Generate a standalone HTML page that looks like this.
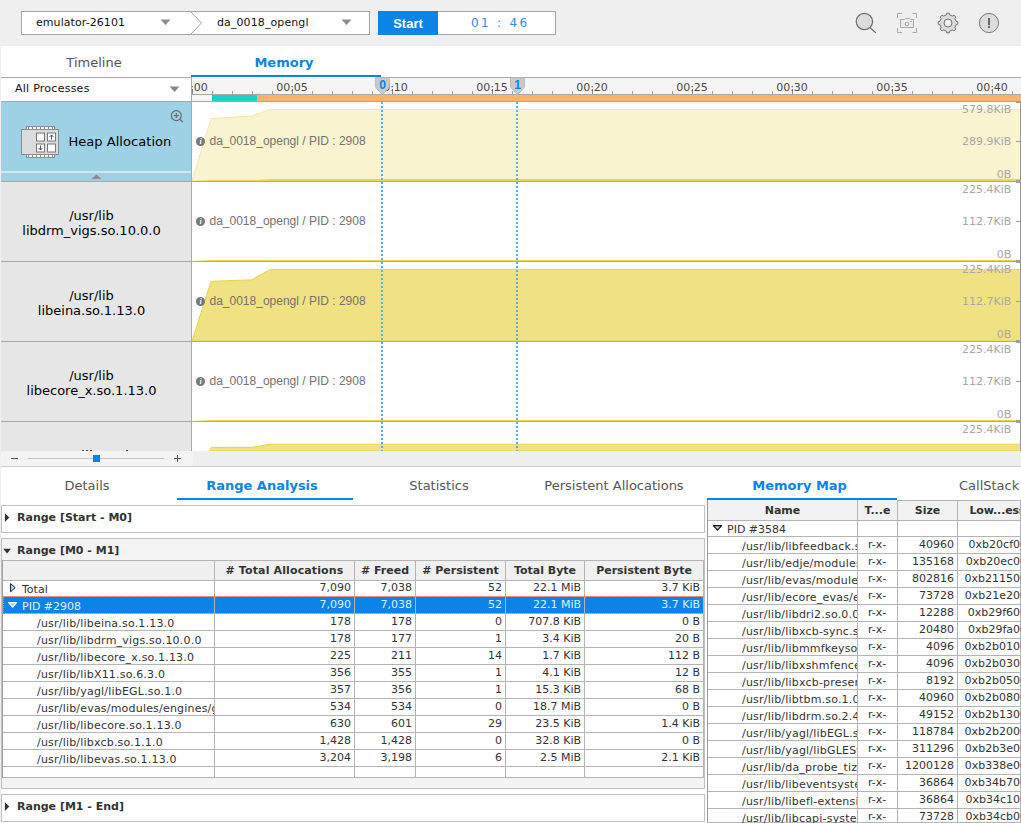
<!DOCTYPE html>
<html><head><meta charset="utf-8"><title>Memory</title>
<style>
*{box-sizing:border-box;margin:0;padding:0}
html,body{width:1021px;height:823px;overflow:hidden;background:#fff}
body{position:relative;font-family:"DejaVu Sans","Liberation Sans",sans-serif;font-size:11px;color:#333;line-height:1}
.a{position:absolute}
.t{position:absolute;white-space:pre;line-height:1}
.b{font-weight:bold}
.f13{font-size:13px}
.c{text-align:center}
.r{text-align:right}
.lbl{position:absolute;left:209.5px;font-family:"Liberation Sans",sans-serif;font-size:12px;color:#727272;white-space:pre;line-height:14px;height:14px}
.ic{position:absolute;left:196px;width:9px;height:9px;border-radius:50%;background:#777;color:#fff;font-family:"Liberation Serif",serif;font-size:8px;font-weight:bold;font-style:italic;line-height:9px;text-align:center}
.ax{position:absolute;right:9.6px;color:#a8a8a8;font-size:11px;white-space:pre;line-height:13px;height:13px}
.lc{position:absolute;left:1px;width:190px;background:#e6e6e6;color:#000;font-size:13px;line-height:15px;text-align:center;padding-right:9px}
.hl{position:absolute;height:1px;background:#a8a8a8}
.vl{position:absolute;width:1px;background:#a8a8a8}
.cell{position:absolute;white-space:pre;overflow:hidden;height:13px;line-height:13px}
</style></head>
<body>
<div class="a" style="left:0;top:0;width:1021px;height:46px;background:#efefef"></div>
<div class="a" style="left:0;top:46px;width:1px;height:777px;background:#efefef"></div>
<div class="a" style="left:21px;top:11px;width:349px;height:24px;background:#fff;border:1px solid #a6a6a6"></div>
<svg class="a" style="left:186px;top:11px" width="20" height="24" viewBox="0 0 20 24"><path d="M4.5 0.5 L15.5 12 L4.5 23.5" fill="none" stroke="#a6a6a6" stroke-width="1"/></svg>
<div class="t" style="left:36px;top:17px;letter-spacing:.07px;color:#111">emulator-26101</div>
<div class="t" style="left:217px;top:17px;letter-spacing:.1px;color:#111">da_0018_opengl</div>
<svg class="a" style="left:160px;top:19px" width="11" height="7"><path d="M0.5 0.5h10l-5 5.5z" fill="#8a8a8a"/></svg>
<svg class="a" style="left:341px;top:19px" width="11" height="7"><path d="M0.5 0.5h10l-5 5.5z" fill="#8a8a8a"/></svg>
<div class="a" style="left:378px;top:11px;width:178px;height:24px;background:#fff;border:1px solid #a6a6a6"></div>
<div class="a c" style="left:378px;top:11px;width:60px;height:24px;background:#0a84e6;color:#fff;font-family:'Liberation Sans',sans-serif;font-weight:bold;font-size:13px;line-height:26px">Start</div>
<div class="t" style="left:471px;top:17px;font-size:12px;letter-spacing:2.3px;color:#2a8fe8">01 : 46</div>
<svg class="a" style="left:850px;top:8px" width="160" height="30" viewBox="850 8 160 30">
<circle cx="864.4" cy="21.5" r="8.2" fill="#dcdcdc" stroke="#6e6e6e" stroke-width="1.2"/>
<path d="M870.3 27.8L875.8 32.8" stroke="#555" stroke-width="1.1" fill="none"/>
<g stroke="#a8a8a8" fill="none" stroke-width="1">
<path d="M897.5 18V13.5H902M912.5 13.5H916.5V18M916.5 28V32.5H912.5M902 32.5H897.5V28"/>
<path d="M900.5 19.5H904.5L905.5 18.5H909.5L910.5 19.5H913.5V27.5H900.5Z" fill="#ededed"/>
<circle cx="907" cy="24" r="1.8"/>
<path d="M910 21.5H912"/>
</g>
<path d="M946.15 15.01 L946.68 13.19 L949.32 13.19 L949.85 15.01 L952.34 16.04 L954.01 15.13 L955.87 16.99 L954.96 18.66 L955.99 21.15 L957.81 21.68 L957.81 24.32 L955.99 24.85 L954.96 27.34 L955.87 29.01 L954.01 30.87 L952.34 29.96 L949.85 30.99 L949.32 32.81 L946.68 32.81 L946.15 30.99 L943.66 29.96 L941.99 30.87 L940.13 29.01 L941.04 27.34 L940.01 24.85 L938.19 24.32 L938.19 21.68 L940.01 21.15 L941.04 18.66 L940.13 16.99 L941.99 15.13 L943.66 16.04Z" fill="#dcdcdc" stroke="#707070" stroke-width="1"/>
<circle cx="948" cy="23" r="4" fill="#efefef" stroke="#707070" stroke-width="1"/>
<circle cx="989" cy="23" r="9.6" fill="#dcdcdc" stroke="#7a7a7a" stroke-width="1"/>
<rect x="988" y="18" width="2" height="7.2" fill="#666"/><rect x="988" y="26.2" width="2" height="1.8" fill="#666"/>
</svg>
<div class="t f13 c" style="left:44px;top:56px;width:100px;color:#555">Timeline</div>
<div class="t f13 b c" style="left:234px;top:56px;width:100px;color:#0a84e6">Memory</div>
<div class="a" style="left:191px;top:75px;width:190px;height:2px;background:#0a84e6"></div>
<div class="hl" style="left:1px;top:77px;width:190px"></div>
<div class="hl" style="left:1px;top:101px;width:1020px"></div>
<div class="vl" style="left:191px;top:77px;height:374px"></div>
<div class="t" style="left:15px;top:83px;font-size:11px;letter-spacing:.25px;color:#111">All Processes</div>
<svg class="a" style="left:169px;top:86px" width="11" height="7"><path d="M0.5 0.5h10l-5 5.5z" fill="#8a8a8a"/></svg>
<div class="a" style="left:192px;top:78px;width:829px;height:23px;background:#f5f5f5"></div>
<div class="hl" style="left:381px;top:77px;width:640px"></div>
<div class="hl" style="left:192px;top:94px;width:829px"></div>
<div class="a" style="left:212px;top:95px;width:45px;height:6px;background:#1fd0c8"></div>
<div class="a" style="left:257px;top:95px;width:764px;height:6px;background:#fdb36b"></div>
<div class="vl" style="left:192px;top:89px;height:5px;background:#8c8c8c"></div><div class="vl" style="left:212px;top:91px;height:3px;background:#a0a0a0"></div><div class="vl" style="left:232px;top:91px;height:3px;background:#a0a0a0"></div><div class="vl" style="left:252px;top:91px;height:3px;background:#a0a0a0"></div><div class="vl" style="left:272px;top:91px;height:3px;background:#a0a0a0"></div><div class="vl" style="left:292px;top:89px;height:5px;background:#8c8c8c"></div><div class="vl" style="left:312px;top:91px;height:3px;background:#a0a0a0"></div><div class="vl" style="left:332px;top:91px;height:3px;background:#a0a0a0"></div><div class="vl" style="left:352px;top:91px;height:3px;background:#a0a0a0"></div><div class="vl" style="left:372px;top:91px;height:3px;background:#a0a0a0"></div><div class="vl" style="left:392px;top:89px;height:5px;background:#8c8c8c"></div><div class="vl" style="left:412px;top:91px;height:3px;background:#a0a0a0"></div><div class="vl" style="left:432px;top:91px;height:3px;background:#a0a0a0"></div><div class="vl" style="left:452px;top:91px;height:3px;background:#a0a0a0"></div><div class="vl" style="left:472px;top:91px;height:3px;background:#a0a0a0"></div><div class="vl" style="left:492px;top:89px;height:5px;background:#8c8c8c"></div><div class="vl" style="left:512px;top:91px;height:3px;background:#a0a0a0"></div><div class="vl" style="left:532px;top:91px;height:3px;background:#a0a0a0"></div><div class="vl" style="left:552px;top:91px;height:3px;background:#a0a0a0"></div><div class="vl" style="left:572px;top:91px;height:3px;background:#a0a0a0"></div><div class="vl" style="left:592px;top:89px;height:5px;background:#8c8c8c"></div><div class="vl" style="left:612px;top:91px;height:3px;background:#a0a0a0"></div><div class="vl" style="left:632px;top:91px;height:3px;background:#a0a0a0"></div><div class="vl" style="left:652px;top:91px;height:3px;background:#a0a0a0"></div><div class="vl" style="left:672px;top:91px;height:3px;background:#a0a0a0"></div><div class="vl" style="left:692px;top:89px;height:5px;background:#8c8c8c"></div><div class="vl" style="left:712px;top:91px;height:3px;background:#a0a0a0"></div><div class="vl" style="left:732px;top:91px;height:3px;background:#a0a0a0"></div><div class="vl" style="left:752px;top:91px;height:3px;background:#a0a0a0"></div><div class="vl" style="left:772px;top:91px;height:3px;background:#a0a0a0"></div><div class="vl" style="left:792px;top:89px;height:5px;background:#8c8c8c"></div><div class="vl" style="left:812px;top:91px;height:3px;background:#a0a0a0"></div><div class="vl" style="left:832px;top:91px;height:3px;background:#a0a0a0"></div><div class="vl" style="left:852px;top:91px;height:3px;background:#a0a0a0"></div><div class="vl" style="left:872px;top:91px;height:3px;background:#a0a0a0"></div><div class="vl" style="left:892px;top:89px;height:5px;background:#8c8c8c"></div><div class="vl" style="left:912px;top:91px;height:3px;background:#a0a0a0"></div><div class="vl" style="left:932px;top:91px;height:3px;background:#a0a0a0"></div><div class="vl" style="left:952px;top:91px;height:3px;background:#a0a0a0"></div><div class="vl" style="left:972px;top:91px;height:3px;background:#a0a0a0"></div><div class="vl" style="left:992px;top:89px;height:5px;background:#8c8c8c"></div><div class="vl" style="left:1012px;top:91px;height:3px;background:#a0a0a0"></div>
<div class="a" style="left:192px;top:78px;width:829px;height:16px;overflow:hidden">
<div class="t c" style="left:-30px;top:4px;width:60px;color:#4a4a4a">00:00</div>
<div class="t c" style="left:70px;top:4px;width:60px;color:#4a4a4a">00:05</div>
<div class="t c" style="left:170px;top:4px;width:60px;color:#4a4a4a">00:10</div>
<div class="t c" style="left:270px;top:4px;width:60px;color:#4a4a4a">00:15</div>
<div class="t c" style="left:370px;top:4px;width:60px;color:#4a4a4a">00:20</div>
<div class="t c" style="left:470px;top:4px;width:60px;color:#4a4a4a">00:25</div>
<div class="t c" style="left:570px;top:4px;width:60px;color:#4a4a4a">00:30</div>
<div class="t c" style="left:670px;top:4px;width:60px;color:#4a4a4a">00:35</div>
<div class="t c" style="left:770px;top:4px;width:60px;color:#4a4a4a">00:40</div>
</div>
<div class="a" style="left:1px;top:102px;width:190px;height:79px;background:#9dd1e6"></div>
<div class="a" style="left:1px;top:171px;width:190px;height:2px;background:#d3e4eb"></div>
<svg class="a" style="left:91px;top:174px" width="11" height="6"><path d="M0.5 5h10l-5 -4.5z" fill="#8c8c8c"/></svg>
<div class="t f13" style="left:68.4px;top:135px;letter-spacing:.05px;color:#000">Heap Allocation</div>
<svg class="a" style="left:20px;top:125px" width="40" height="34" viewBox="20 125 40 34"><rect x="26.5" y="126.5" width="28" height="31" fill="#f4f4f4" stroke="#8c8c8c"/><path d="M28.5 126.5V129M28.5 155V157.5" stroke="#8c8c8c" fill="none"/><path d="M32.5 126.5V129M32.5 155V157.5" stroke="#8c8c8c" fill="none"/><path d="M36.5 126.5V129M36.5 155V157.5" stroke="#8c8c8c" fill="none"/><path d="M40.5 126.5V129M40.5 155V157.5" stroke="#8c8c8c" fill="none"/><path d="M44.5 126.5V129M44.5 155V157.5" stroke="#8c8c8c" fill="none"/><path d="M48.5 126.5V129M48.5 155V157.5" stroke="#8c8c8c" fill="none"/><path d="M52.5 126.5V129M52.5 155V157.5" stroke="#8c8c8c" fill="none"/><rect x="21.5" y="129.5" width="37" height="25" fill="#dcdcdc" stroke="#8c8c8c"/><rect x="36.5" y="133.0" width="8" height="8" fill="#fff" stroke="#777"/><rect x="47.5" y="133.0" width="8" height="8" fill="#fff" stroke="#777"/><rect x="36.5" y="144.0" width="8" height="8" fill="#fff" stroke="#777"/><rect x="47.5" y="144.0" width="8" height="8" fill="#fff" stroke="#777"/><path d="M51.5 139.5V135M49.5 137L51.5 135L53.5 137" stroke="#555" fill="none"/><path d="M40.5 145.5V150M38.5 148L40.5 150L42.5 148" stroke="#555" fill="none"/></svg>
<svg class="a" style="left:168px;top:108px" width="18" height="18" viewBox="168 108 18 18"><circle cx="176.3" cy="115.6" r="5" fill="none" stroke="#6a6a6a" stroke-width="1.2"/><path d="M173.8 115.6h5M176.3 113.1v5M179.9 119.4L182.8 122" stroke="#6a6a6a" stroke-width="1.2" fill="none"/></svg>
<div class="lc" style="top:182px;height:79px;padding-top:26px;overflow:hidden">/usr/lib<br>libdrm_vigs.so.10.0.0</div>
<div class="lc" style="top:262px;height:79px;padding-top:26px;overflow:hidden">/usr/lib<br>libeina.so.1.13.0</div>
<div class="lc" style="top:342px;height:79px;padding-top:26px;overflow:hidden">/usr/lib<br>libecore_x.so.1.13.0</div>
<div class="lc" style="top:422px;height:29px;padding-top:31px;overflow:hidden">/usr/lib<br>libecore.so.1.13.0</div>
<div class="hl" style="left:1px;top:181px;width:1020px"></div>
<div class="hl" style="left:1px;top:261px;width:1020px"></div>
<div class="hl" style="left:1px;top:341px;width:1020px"></div>
<div class="hl" style="left:1px;top:421px;width:1020px"></div>
<svg class="a" style="left:192px;top:102px" width="829" height="349" viewBox="192 102 829 349"><path d="M192 181.0 L211 118.5 L251.6 116.0 L270.3 109.4 L1021 109.4 L1021 181.0 Z" fill="#f9f3cf" stroke="#f1e8a8" stroke-width="1"/><path d="M192 181 L211 180 L257 180 L270 179 L1021 179 L1021 181Z" fill="#ead650"/><path d="M192 261 L211 260 L1021 260 L1021 261Z" fill="#ead650"/><path d="M192 341.0 L211 281.3 L251.6 279.8 L270.3 269.4 L1021 269.4 L1021 341.0 Z" fill="#f0e183" stroke="#e8d350" stroke-width="1"/><path d="M192 421 L211 420 L1021 420 L1021 421Z" fill="#ead650"/><path d="M209.8 451 L211 447.5 L251.6 447.3 L270.3 444.2 L1021 444.2 L1021 451Z" fill="#f0e183" stroke="#e8d350"/><path d="M382 102V451" stroke="#5aaeea" stroke-width="2" stroke-dasharray="2 2" fill="none"/><path d="M517 102V451" stroke="#5aaeea" stroke-width="2" stroke-dasharray="2 2" fill="none"/></svg>
<div class="hl" style="left:192px;top:181px;width:829px"></div>
<div class="hl" style="left:192px;top:261px;width:829px"></div>
<div class="hl" style="left:192px;top:341px;width:829px"></div>
<div class="hl" style="left:192px;top:421px;width:829px"></div>
<div class="vl" style="left:1020px;top:102px;height:349px;background:#9a9a9a"></div>
<div class="hl" style="left:1016px;top:102px;width:4px;background:#9a9a9a"></div>
<div class="hl" style="left:1016px;top:141px;width:4px;background:#9a9a9a"></div>
<div class="hl" style="left:1016px;top:180px;width:4px;background:#9a9a9a"></div>
<div class="hl" style="left:1016px;top:182px;width:4px;background:#9a9a9a"></div>
<div class="hl" style="left:1016px;top:221px;width:4px;background:#9a9a9a"></div>
<div class="hl" style="left:1016px;top:260px;width:4px;background:#9a9a9a"></div>
<div class="hl" style="left:1016px;top:262px;width:4px;background:#9a9a9a"></div>
<div class="hl" style="left:1016px;top:301px;width:4px;background:#9a9a9a"></div>
<div class="hl" style="left:1016px;top:340px;width:4px;background:#9a9a9a"></div>
<div class="hl" style="left:1016px;top:342px;width:4px;background:#9a9a9a"></div>
<div class="hl" style="left:1016px;top:381px;width:4px;background:#9a9a9a"></div>
<div class="hl" style="left:1016px;top:420px;width:4px;background:#9a9a9a"></div>
<div class="hl" style="left:1016px;top:422px;width:4px;background:#9a9a9a"></div>
<div class="ic" style="top:137.0px">i</div>
<div class="lbl" style="top:134.0px">da_0018_opengl / PID : 2908</div>
<div class="ic" style="top:217.0px">i</div>
<div class="lbl" style="top:214.0px">da_0018_opengl / PID : 2908</div>
<div class="ic" style="top:297.0px">i</div>
<div class="lbl" style="top:294.0px">da_0018_opengl / PID : 2908</div>
<div class="ic" style="top:377.0px">i</div>
<div class="lbl" style="top:374.0px">da_0018_opengl / PID : 2908</div>
<div class="ax" style="top:103px">579.8KiB</div>
<div class="ax" style="top:135px">289.9KiB</div>
<div class="ax" style="top:168px">0B</div>
<div class="ax" style="top:183px">225.4KiB</div>
<div class="ax" style="top:215px">112.7KiB</div>
<div class="ax" style="top:248px">0B</div>
<div class="ax" style="top:263px">225.4KiB</div>
<div class="ax" style="top:295px">112.7KiB</div>
<div class="ax" style="top:328px">0B</div>
<div class="ax" style="top:343px">225.4KiB</div>
<div class="ax" style="top:375px">112.7KiB</div>
<div class="ax" style="top:408px">0B</div>
<div class="ax" style="top:423px">225.4KiB</div>
<svg class="a" style="left:374px;top:77px" width="16" height="19" viewBox="0 0 16 19"><path d="M1.4 0.5H15.6V10L8.5 18L1.4 10Z" fill="#c9c9c9" stroke="#adadad" stroke-width="0.7"/><text x="8.5" y="11.8" text-anchor="middle" style="font:bold 12px 'Liberation Sans',sans-serif" fill="#0a84e6">0</text></svg>
<svg class="a" style="left:509px;top:77px" width="16" height="19" viewBox="0 0 16 19"><path d="M1.4 0.5H15.6V10L8.5 18L1.4 10Z" fill="#c9c9c9" stroke="#adadad" stroke-width="0.7"/><text x="8.5" y="11.8" text-anchor="middle" style="font:bold 12px 'Liberation Sans',sans-serif" fill="#0a84e6">1</text></svg>
<div class="a" style="left:82px;top:450px;width:2px;height:1px;background:#5a4030"></div>
<div class="a" style="left:86px;top:450px;width:2px;height:1px;background:#5a4030"></div>
<div class="a" style="left:90px;top:450px;width:2px;height:1px;background:#5a4030"></div>
<div class="a" style="left:126px;top:450px;width:2px;height:1px;background:#5a4030"></div>
<div class="a" style="left:1px;top:451px;width:1020px;height:15px;background:#eeeeee"></div>
<div class="a" style="left:1px;top:451px;width:192px;height:15px;background:#f3f3f3"></div>
<div class="a" style="left:1px;top:466px;width:1020px;height:1px;background:#cfcfcf"></div>
<div class="a" style="left:28px;top:458px;width:136px;height:1px;background:#c4c4c4"></div>
<div class="a" style="left:93px;top:455px;width:7px;height:7px;background:#0a84e6"></div>
<div class="a" style="left:11px;top:458px;width:7px;height:1px;background:#555"></div>
<div class="a" style="left:174px;top:458px;width:7px;height:1px;background:#555"></div>
<div class="a" style="left:177px;top:455px;width:1px;height:7px;background:#555"></div>
<div class="t f13 c" style="left:-13px;top:479px;width:200px;color:#555">Details</div>
<div class="t f13 b c" style="left:162.0px;top:479px;width:200px;color:#0a84e6">Range Analysis</div>
<div class="t f13 c" style="left:339px;top:479px;width:200px;color:#555">Statistics</div>
<div class="t f13 c" style="left:514px;top:479px;width:200px;color:#555">Persistent Allocations</div>
<div class="t f13 b c" style="left:699.6px;top:479px;width:200px;color:#0a84e6">Memory Map</div>
<div class="t f13" style="left:959px;top:479px;color:#555">CallStack</div>
<div class="a" style="left:177px;top:498px;width:176px;height:2px;background:#0a84e6"></div>
<div class="a" style="left:707px;top:498px;width:190px;height:2px;background:#0a84e6"></div>
<div class="a" style="left:1px;top:505px;width:704px;height:28px;border:1px solid #c0c0c0;background:#fff"></div>
<svg class="a" style="left:4px;top:513px" width="7" height="10"><path d="M0.9 0.2V9L5.3 4.6Z" fill="#333"/></svg>
<div class="t b" style="left:17px;top:512px;color:#333">Range [Start - M0]</div>
<div class="a" style="left:1px;top:538px;width:704px;height:251px;border:1px solid #c0c0c0;background:#f3f3f3"></div>
<svg class="a" style="left:3px;top:548px" width="9" height="6"><path d="M0.3 0.8H7.9L4.1 5.4Z" fill="#333"/></svg>
<div class="t b" style="left:17px;top:545px;color:#333">Range [M0 - M1]</div>
<div class="a" style="left:1px;top:794px;width:704px;height:28px;border:1px solid #c0c0c0;background:#fff"></div>
<svg class="a" style="left:4px;top:802px" width="7" height="10"><path d="M0.9 0.2V9L5.3 4.6Z" fill="#333"/></svg>
<div class="t b" style="left:17px;top:801px;color:#333">Range [M1 - End]</div>
<div class="a" style="left:2px;top:560px;width:702px;height:218px;background:#fff"></div>
<div class="a" style="left:2px;top:561px;width:702px;height:19px;background:#f0f0f0"></div>
<div class="a" style="left:3px;top:597px;width:700px;height:16px;background:#0a84e6"></div>
<div class="hl" style="left:2px;top:560px;width:702px;background:#b4b4b4"></div>
<div class="hl" style="left:2px;top:580px;width:702px;background:#b4b4b4"></div>
<div class="hl" style="left:2px;top:596px;width:702px;background:#b4b4b4"></div>
<div class="hl" style="left:2px;top:613px;width:702px;background:#b4b4b4"></div>
<div class="hl" style="left:2px;top:630px;width:702px;background:#b4b4b4"></div>
<div class="hl" style="left:2px;top:647px;width:702px;background:#b4b4b4"></div>
<div class="hl" style="left:2px;top:664px;width:702px;background:#b4b4b4"></div>
<div class="hl" style="left:2px;top:681px;width:702px;background:#b4b4b4"></div>
<div class="hl" style="left:2px;top:698px;width:702px;background:#b4b4b4"></div>
<div class="hl" style="left:2px;top:715px;width:702px;background:#b4b4b4"></div>
<div class="hl" style="left:2px;top:732px;width:702px;background:#b4b4b4"></div>
<div class="hl" style="left:2px;top:749px;width:702px;background:#b4b4b4"></div>
<div class="hl" style="left:2px;top:766px;width:702px;background:#b4b4b4"></div>
<div class="hl" style="left:2px;top:777px;width:702px;background:#b4b4b4"></div>
<div class="vl" style="left:2px;top:560px;height:218px;background:#a0a0a0"></div>
<div class="vl" style="left:214px;top:560px;height:218px;background:#b4b4b4"></div>
<div class="vl" style="left:354px;top:560px;height:218px;background:#b4b4b4"></div>
<div class="vl" style="left:415px;top:560px;height:218px;background:#b4b4b4"></div>
<div class="vl" style="left:505px;top:560px;height:218px;background:#b4b4b4"></div>
<div class="vl" style="left:584px;top:560px;height:218px;background:#b4b4b4"></div>
<div class="vl" style="left:703px;top:560px;height:218px;background:#b4b4b4"></div>
<div class="a" style="left:3px;top:596px;width:700px;height:18px;border:1px dotted #e4806a;border-right:none"></div>
<div class="cell b c" style="left:215px;top:564px;width:139px;letter-spacing:.13px"># Total Allocations</div>
<div class="cell b c" style="left:355px;top:564px;width:60px"># Freed</div>
<div class="cell b c" style="left:416px;top:564px;width:89px"># Persistent</div>
<div class="cell b c" style="left:506px;top:564px;width:78px">Total Byte</div>
<div class="cell b c" style="left:585px;top:564px;width:118px">Persistent Byte</div>
<div class="cell" style="left:22px;top:583px;width:192px;color:#333">Total</div>
<div class="cell r" style="left:215px;top:581px;width:136px;color:#333">7,090</div>
<div class="cell r" style="left:355px;top:581px;width:57px;color:#333">7,038</div>
<div class="cell r" style="left:416px;top:581px;width:86px;color:#333">52</div>
<div class="cell r" style="left:506px;top:581px;width:75px;color:#333">22.1 MiB</div>
<div class="cell r" style="left:585px;top:581px;width:115px;color:#333">3.7 KiB</div>
<div class="cell" style="left:22px;top:600px;width:192px;color:#e4eefa">PID #2908</div>
<div class="cell r" style="left:215px;top:598px;width:136px;color:#e4eefa">7,090</div>
<div class="cell r" style="left:355px;top:598px;width:57px;color:#e4eefa">7,038</div>
<div class="cell r" style="left:416px;top:598px;width:86px;color:#e4eefa">52</div>
<div class="cell r" style="left:506px;top:598px;width:75px;color:#e4eefa">22.1 MiB</div>
<div class="cell r" style="left:585px;top:598px;width:115px;color:#e4eefa">3.7 KiB</div>
<div class="cell" style="left:37px;top:617px;width:177px;color:#333;letter-spacing:.2px">/usr/lib/libeina.so.1.13.0</div>
<div class="cell r" style="left:215px;top:615px;width:136px;color:#333">178</div>
<div class="cell r" style="left:355px;top:615px;width:57px;color:#333">178</div>
<div class="cell r" style="left:416px;top:615px;width:86px;color:#333">0</div>
<div class="cell r" style="left:506px;top:615px;width:75px;color:#333">707.8 KiB</div>
<div class="cell r" style="left:585px;top:615px;width:115px;color:#333">0 B</div>
<div class="cell" style="left:37px;top:634px;width:177px;color:#333;letter-spacing:.2px">/usr/lib/libdrm_vigs.so.10.0.0</div>
<div class="cell r" style="left:215px;top:632px;width:136px;color:#333">178</div>
<div class="cell r" style="left:355px;top:632px;width:57px;color:#333">177</div>
<div class="cell r" style="left:416px;top:632px;width:86px;color:#333">1</div>
<div class="cell r" style="left:506px;top:632px;width:75px;color:#333">3.4 KiB</div>
<div class="cell r" style="left:585px;top:632px;width:115px;color:#333">20 B</div>
<div class="cell" style="left:37px;top:651px;width:177px;color:#333;letter-spacing:.2px">/usr/lib/libecore_x.so.1.13.0</div>
<div class="cell r" style="left:215px;top:649px;width:136px;color:#333">225</div>
<div class="cell r" style="left:355px;top:649px;width:57px;color:#333">211</div>
<div class="cell r" style="left:416px;top:649px;width:86px;color:#333">14</div>
<div class="cell r" style="left:506px;top:649px;width:75px;color:#333">1.7 KiB</div>
<div class="cell r" style="left:585px;top:649px;width:115px;color:#333">112 B</div>
<div class="cell" style="left:37px;top:668px;width:177px;color:#333;letter-spacing:.2px">/usr/lib/libX11.so.6.3.0</div>
<div class="cell r" style="left:215px;top:666px;width:136px;color:#333">356</div>
<div class="cell r" style="left:355px;top:666px;width:57px;color:#333">355</div>
<div class="cell r" style="left:416px;top:666px;width:86px;color:#333">1</div>
<div class="cell r" style="left:506px;top:666px;width:75px;color:#333">4.1 KiB</div>
<div class="cell r" style="left:585px;top:666px;width:115px;color:#333">12 B</div>
<div class="cell" style="left:37px;top:685px;width:177px;color:#333;letter-spacing:.2px">/usr/lib/yagl/libEGL.so.1.0</div>
<div class="cell r" style="left:215px;top:683px;width:136px;color:#333">357</div>
<div class="cell r" style="left:355px;top:683px;width:57px;color:#333">356</div>
<div class="cell r" style="left:416px;top:683px;width:86px;color:#333">1</div>
<div class="cell r" style="left:506px;top:683px;width:75px;color:#333">15.3 KiB</div>
<div class="cell r" style="left:585px;top:683px;width:115px;color:#333">68 B</div>
<div class="cell" style="left:37px;top:702px;width:177px;color:#333;letter-spacing:.2px">/usr/lib/evas/modules/engines/gl_x11/v-1.13/module.so</div>
<div class="cell r" style="left:215px;top:700px;width:136px;color:#333">534</div>
<div class="cell r" style="left:355px;top:700px;width:57px;color:#333">534</div>
<div class="cell r" style="left:416px;top:700px;width:86px;color:#333">0</div>
<div class="cell r" style="left:506px;top:700px;width:75px;color:#333">18.7 MiB</div>
<div class="cell r" style="left:585px;top:700px;width:115px;color:#333">0 B</div>
<div class="cell" style="left:37px;top:719px;width:177px;color:#333;letter-spacing:.2px">/usr/lib/libecore.so.1.13.0</div>
<div class="cell r" style="left:215px;top:717px;width:136px;color:#333">630</div>
<div class="cell r" style="left:355px;top:717px;width:57px;color:#333">601</div>
<div class="cell r" style="left:416px;top:717px;width:86px;color:#333">29</div>
<div class="cell r" style="left:506px;top:717px;width:75px;color:#333">23.5 KiB</div>
<div class="cell r" style="left:585px;top:717px;width:115px;color:#333">1.4 KiB</div>
<div class="cell" style="left:37px;top:736px;width:177px;color:#333;letter-spacing:.2px">/usr/lib/libxcb.so.1.1.0</div>
<div class="cell r" style="left:215px;top:734px;width:136px;color:#333">1,428</div>
<div class="cell r" style="left:355px;top:734px;width:57px;color:#333">1,428</div>
<div class="cell r" style="left:416px;top:734px;width:86px;color:#333">0</div>
<div class="cell r" style="left:506px;top:734px;width:75px;color:#333">32.8 KiB</div>
<div class="cell r" style="left:585px;top:734px;width:115px;color:#333">0 B</div>
<div class="cell" style="left:37px;top:753px;width:177px;color:#333;letter-spacing:.2px">/usr/lib/libevas.so.1.13.0</div>
<div class="cell r" style="left:215px;top:751px;width:136px;color:#333">3,204</div>
<div class="cell r" style="left:355px;top:751px;width:57px;color:#333">3,198</div>
<div class="cell r" style="left:416px;top:751px;width:86px;color:#333">6</div>
<div class="cell r" style="left:506px;top:751px;width:75px;color:#333">2.5 MiB</div>
<div class="cell r" style="left:585px;top:751px;width:115px;color:#333">2.1 KiB</div>
<svg class="a" style="left:9px;top:582px" width="8" height="11"><path d="M1.6 1.6V9.8L6.2 5.7Z" fill="#b5dcff" stroke="#151515" stroke-width="1" stroke-linejoin="round"/></svg>
<svg class="a" style="left:7px;top:601px" width="12" height="8"><path d="M1.6 1.6H9.6L5.6 6.2Z" fill="#9fd0ff" stroke="#fff" stroke-width="1.2" stroke-linejoin="round"/></svg>
<div class="a" style="left:707px;top:500px;width:314px;height:20px;background:#f2f2f2"></div>
<div class="hl" style="left:707px;top:520px;width:314px;background:#b4b4b4"></div>
<div class="hl" style="left:707px;top:536px;width:314px;background:#b4b4b4"></div>
<div class="hl" style="left:707px;top:553px;width:314px;background:#b4b4b4"></div>
<div class="hl" style="left:707px;top:570px;width:314px;background:#b4b4b4"></div>
<div class="hl" style="left:707px;top:587px;width:314px;background:#b4b4b4"></div>
<div class="hl" style="left:707px;top:604px;width:314px;background:#b4b4b4"></div>
<div class="hl" style="left:707px;top:621px;width:314px;background:#b4b4b4"></div>
<div class="hl" style="left:707px;top:638px;width:314px;background:#b4b4b4"></div>
<div class="hl" style="left:707px;top:655px;width:314px;background:#b4b4b4"></div>
<div class="hl" style="left:707px;top:672px;width:314px;background:#b4b4b4"></div>
<div class="hl" style="left:707px;top:689px;width:314px;background:#b4b4b4"></div>
<div class="hl" style="left:707px;top:706px;width:314px;background:#b4b4b4"></div>
<div class="hl" style="left:707px;top:723px;width:314px;background:#b4b4b4"></div>
<div class="hl" style="left:707px;top:740px;width:314px;background:#b4b4b4"></div>
<div class="hl" style="left:707px;top:757px;width:314px;background:#b4b4b4"></div>
<div class="hl" style="left:707px;top:774px;width:314px;background:#b4b4b4"></div>
<div class="hl" style="left:707px;top:791px;width:314px;background:#b4b4b4"></div>
<div class="hl" style="left:707px;top:808px;width:314px;background:#b4b4b4"></div>
<div class="hl" style="left:707px;top:825px;width:314px;background:#b4b4b4"></div>
<div class="vl" style="left:707px;top:500px;height:323px;background:#9a9a9a"></div>
<div class="vl" style="left:857px;top:500px;height:323px;background:#b4b4b4"></div>
<div class="vl" style="left:897px;top:500px;height:323px;background:#b4b4b4"></div>
<div class="vl" style="left:957px;top:500px;height:323px;background:#b4b4b4"></div>
<div class="hl" style="left:707px;top:822px;width:314px;background:#b4b4b4"></div>
<div class="cell b" style="left:969.5px;top:504px;width:60px;letter-spacing:-.15px">Low...ess</div>
<div class="hl" style="left:897px;top:500px;width:124px;background:#b4b4b4"></div>
<div class="vl" style="left:1020px;top:500px;height:323px;background:#b4b4b4"></div>
<div class="cell b c" style="left:708px;top:504px;width:149px">Name</div>
<div class="cell b c" style="left:858px;top:504px;width:39px">T...e</div>
<div class="cell b c" style="left:898px;top:504px;width:59px">Size</div>
<svg class="a" style="left:712px;top:524px" width="12" height="8"><path d="M1.4 1.6H9.6L5.5 6.2Z" fill="#a6d3fb" stroke="#151515" stroke-width="1.2" stroke-linejoin="round"/></svg>
<div class="cell" style="left:727px;top:523px;width:129px">PID #3584</div>
<div class="cell" style="left:742px;top:540px;width:115px;letter-spacing:.2px">/usr/lib/libfeedback.so.0.1.4</div>
<div class="cell" style="left:868px;top:538px;width:29px">r-x-</div>
<div class="cell r" style="left:898px;top:538px;width:56px">40960</div>
<div class="cell r" style="left:958px;top:538px;width:76px">0xb20cf000</div>
<div class="cell" style="left:742px;top:557px;width:115px;letter-spacing:.2px">/usr/lib/edje/modules/elm/v-1.13/module.so</div>
<div class="cell" style="left:868px;top:555px;width:29px">r-x-</div>
<div class="cell r" style="left:898px;top:555px;width:56px">135168</div>
<div class="cell r" style="left:958px;top:555px;width:76px">0xb20ec000</div>
<div class="cell" style="left:742px;top:574px;width:115px;letter-spacing:.2px">/usr/lib/evas/modules/engines/gl_x11/v-1.13/module.so</div>
<div class="cell" style="left:868px;top:572px;width:29px">r-x-</div>
<div class="cell r" style="left:898px;top:572px;width:56px">802816</div>
<div class="cell r" style="left:958px;top:572px;width:76px">0xb2115000</div>
<div class="cell" style="left:742px;top:591px;width:115px;letter-spacing:.2px">/usr/lib/ecore_evas/engines/x/v-1.13/module.so</div>
<div class="cell" style="left:868px;top:589px;width:29px">r-x-</div>
<div class="cell r" style="left:898px;top:589px;width:56px">73728</div>
<div class="cell r" style="left:958px;top:589px;width:76px">0xb21e2000</div>
<div class="cell" style="left:742px;top:608px;width:115px;letter-spacing:.2px">/usr/lib/libdri2.so.0.0.0</div>
<div class="cell" style="left:868px;top:606px;width:29px">r-x-</div>
<div class="cell r" style="left:898px;top:606px;width:56px">12288</div>
<div class="cell r" style="left:958px;top:606px;width:76px">0xb29f6000</div>
<div class="cell" style="left:742px;top:625px;width:115px;letter-spacing:.2px">/usr/lib/libxcb-sync.so.1.0.0</div>
<div class="cell" style="left:868px;top:623px;width:29px">r-x-</div>
<div class="cell r" style="left:898px;top:623px;width:56px">20480</div>
<div class="cell r" style="left:958px;top:623px;width:76px">0xb29fa000</div>
<div class="cell" style="left:742px;top:642px;width:115px;letter-spacing:.2px">/usr/lib/libmmfkeysound.so.0.0.0</div>
<div class="cell" style="left:868px;top:640px;width:29px">r-x-</div>
<div class="cell r" style="left:898px;top:640px;width:56px">4096</div>
<div class="cell r" style="left:958px;top:640px;width:76px">0xb2b01000</div>
<div class="cell" style="left:742px;top:659px;width:115px;letter-spacing:.2px">/usr/lib/libxshmfence.so.1.0.0</div>
<div class="cell" style="left:868px;top:657px;width:29px">r-x-</div>
<div class="cell r" style="left:898px;top:657px;width:56px">4096</div>
<div class="cell r" style="left:958px;top:657px;width:76px">0xb2b03000</div>
<div class="cell" style="left:742px;top:676px;width:115px;letter-spacing:.2px">/usr/lib/libxcb-present.so.0.0.0</div>
<div class="cell" style="left:868px;top:674px;width:29px">r-x-</div>
<div class="cell r" style="left:898px;top:674px;width:56px">8192</div>
<div class="cell r" style="left:958px;top:674px;width:76px">0xb2b05000</div>
<div class="cell" style="left:742px;top:693px;width:115px;letter-spacing:.2px">/usr/lib/libtbm.so.1.0.0</div>
<div class="cell" style="left:868px;top:691px;width:29px">r-x-</div>
<div class="cell r" style="left:898px;top:691px;width:56px">40960</div>
<div class="cell r" style="left:958px;top:691px;width:76px">0xb2b08000</div>
<div class="cell" style="left:742px;top:710px;width:115px;letter-spacing:.2px">/usr/lib/libdrm.so.2.4.0</div>
<div class="cell" style="left:868px;top:708px;width:29px">r-x-</div>
<div class="cell r" style="left:898px;top:708px;width:56px">49152</div>
<div class="cell r" style="left:958px;top:708px;width:76px">0xb2b13000</div>
<div class="cell" style="left:742px;top:727px;width:115px;letter-spacing:.2px">/usr/lib/yagl/libEGL.so.1.0</div>
<div class="cell" style="left:868px;top:725px;width:29px">r-x-</div>
<div class="cell r" style="left:898px;top:725px;width:56px">118784</div>
<div class="cell r" style="left:958px;top:725px;width:76px">0xb2b20000</div>
<div class="cell" style="left:742px;top:744px;width:115px;letter-spacing:.2px">/usr/lib/yagl/libGLESv2.so.2.0</div>
<div class="cell" style="left:868px;top:742px;width:29px">r-x-</div>
<div class="cell r" style="left:898px;top:742px;width:56px">311296</div>
<div class="cell r" style="left:958px;top:742px;width:76px">0xb2b3e000</div>
<div class="cell" style="left:742px;top:761px;width:115px;letter-spacing:.2px">/usr/lib/da_probe_tizen.so</div>
<div class="cell" style="left:868px;top:759px;width:29px">r-x-</div>
<div class="cell r" style="left:898px;top:759px;width:56px">1200128</div>
<div class="cell r" style="left:958px;top:759px;width:76px">0xb338e000</div>
<div class="cell" style="left:742px;top:778px;width:115px;letter-spacing:.2px">/usr/lib/libeventsystem.so.0.1.0</div>
<div class="cell" style="left:868px;top:776px;width:29px">r-x-</div>
<div class="cell r" style="left:898px;top:776px;width:56px">36864</div>
<div class="cell r" style="left:958px;top:776px;width:76px">0xb34b7000</div>
<div class="cell" style="left:742px;top:795px;width:115px;letter-spacing:.2px">/usr/lib/libefl-extension.so.0.1.0</div>
<div class="cell" style="left:868px;top:793px;width:29px">r-x-</div>
<div class="cell r" style="left:898px;top:793px;width:56px">36864</div>
<div class="cell r" style="left:958px;top:793px;width:76px">0xb34c1000</div>
<div class="cell" style="left:742px;top:812px;width:115px;letter-spacing:.2px">/usr/lib/libcapi-system-info.so.0.2.0</div>
<div class="cell" style="left:868px;top:810px;width:29px">r-x-</div>
<div class="cell r" style="left:898px;top:810px;width:56px">73728</div>
<div class="cell r" style="left:958px;top:810px;width:76px">0xb34cb000</div>
</body></html>
